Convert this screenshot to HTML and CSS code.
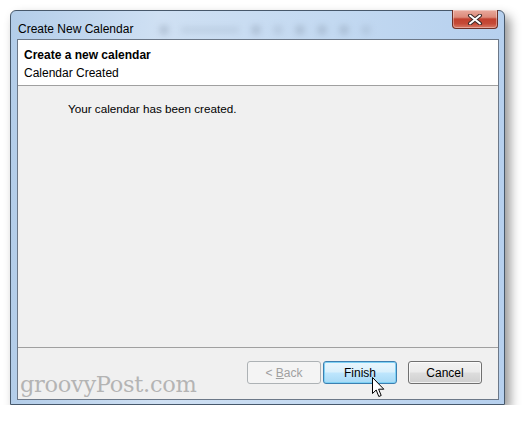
FILE: index.html
```html
<!DOCTYPE html>
<html lang="en">
<head>
    <meta charset="UTF-8">
    <meta name="viewport" content="width=device-width, initial-scale=1.0">
    <title>Create New Calendar</title>
    <link rel="stylesheet" href="styles.css">
</head>
<body>
    <div class="window">
        <div class="titlebar">
            <span class="title">Create New Calendar</span>
            <div class="glass">
                <span class="blur dot"></span>
                <span class="blur smudge"></span>
                <span class="blur dot"></span>
                <span class="blur dot small"></span>
                <span class="blur dot"></span>
                <span class="blur dot"></span>
                <span class="blur dot"></span>
                <span class="blur dot small"></span>
            </div>
            <button class="close" aria-label="Close">
                <svg width="18" height="11" viewBox="0 0 18 11">
                    <path d="M4 1.5 L14 9.5 M14 1.5 L4 9.5" stroke="#3b2a28" stroke-width="4" stroke-linecap="round"/>
                    <path d="M4 1.5 L14 9.5 M14 1.5 L4 9.5" stroke="#ffffff" stroke-width="2" stroke-linecap="round"/>
                </svg>
            </button>
        </div>

        <div class="client">
            <div class="header">
                <div class="header-title">Create a new calendar</div>
                <div class="header-sub">Calendar Created</div>
            </div>
            <div class="content">
                <p class="message">Your calendar has been created.</p>
            </div>
            <div class="footer">
                <button class="btn disabled">&lt; <u>B</u>ack</button>
                <button class="btn default">Finish</button>
                <button class="btn cancel">Cancel</button>
            </div>
            <div class="watermark">groovyPost.com</div>
            <svg class="cursor" width="13" height="21" viewBox="0 0 13 21">
                <path d="M0.5 0.5 L0.5 16.5 L4.2 13 L6.8 19.5 L9.2 18.5 L6.6 12.2 L11.8 12.2 Z" fill="#ffffff" stroke="#000000" stroke-width="1" stroke-linejoin="round"/>
            </svg>
        </div>
    </div>
</body>
</html>
```

FILE: styles.css
```css
/* Windows 7 style wizard dialog */
body {
    margin: 0;
    background: #ffffff;
    font-family: "Liberation Sans", "Noto Sans", sans-serif;
    font-size: 12px;
    color: #000000;
}

.window {
    margin: 10px 0 0 10px;
    width: 495px;
    height: 395px;
    border: 1px solid #47586b;
    border-radius: 6px 6px 0 0;
    background: linear-gradient(90deg, #b3cde9 0%, #cfe0f3 30%, #c3d9f1 65%, #b6d0ee 100%);
    box-shadow: 5px 6px 11px rgba(0, 0, 0, 0.42);
    padding: 0 5px 4px 6px;
    box-sizing: border-box;
    display: flex;
    flex-direction: column;
    position: relative;
}

.titlebar {
    height: 28px;
    display: flex;
    align-items: flex-start;
}

.title {
    margin: 10px 0 0 1px;
    line-height: 16px;
    font-size: 12px;
    color: #000000;
}

.glass {
    flex: 1;
    display: flex;
    gap: 12px;
    margin: 14px 0 0 26px;
}

.blur {
    display: block;
    background: #8797ab;
    filter: blur(3px);
    opacity: 0.4;
}

.dot {
    width: 10px;
    height: 10px;
    border-radius: 50%;
}

.dot.small {
    opacity: 0.25;
}

.smudge {
    width: 58px;
    height: 6px;
    margin-top: 2px;
    opacity: 0.22;
}

.close {
    width: 46px;
    height: 19px;
    margin: -1px 1px 0 0;
    padding: 0;
    border: 1px solid #6e3027;
    border-top: none;
    border-radius: 0 0 4px 4px;
    background: linear-gradient(180deg, #e9aa9c 0%, #dc8a7a 40%, #c2412f 50%, #c54a37 75%, #d97a66 100%);
    box-shadow: inset 0 0 0 1px rgba(255, 255, 255, 0.35);
    display: flex;
    align-items: center;
    justify-content: center;
}

.client {
    flex: 1;
    border: 1px solid #6c7888;
    background: #f0f0f0;
    display: flex;
    flex-direction: column;
    position: relative;
}

.header {
    background: #ffffff;
    height: 46px;
    border-bottom: 1px solid #a0a0a0;
    padding: 6px 0 0 6px;
    box-sizing: border-box;
    line-height: 18px;
}

.header-title {
    font-weight: bold;
}

.content {
    flex: 1;
    border-bottom: 1px solid #a0a0a0;
}

.message {
    margin: 15px 0 0 50px;
    line-height: 16px;
    font-size: 11.7px;
}

.footer {
    height: 51px;
    display: flex;
    justify-content: flex-end;
    align-items: flex-start;
    padding: 13px 16px 0 0;
    box-sizing: border-box;
}

.btn {
    width: 74px;
    height: 23px;
    font-family: inherit;
    font-size: 12px;
    border: 1px solid #707070;
    border-radius: 3px;
    padding: 0;
    color: #000000;
    background: linear-gradient(180deg, #f2f2f2 0%, #ebebeb 48%, #dddddd 52%, #cfcfcf 100%);
    box-shadow: inset 0 0 0 1px rgba(255, 255, 255, 0.7);
}

.btn + .btn {
    margin-left: 2px;
}

.btn.disabled {
    color: #a0a0a0;
    border-color: #adb2b5;
    background: #f4f4f4;
    box-shadow: none;
}

.btn.default {
    border-color: #3c7fb1;
    background: linear-gradient(180deg, #eaf6fd 0%, #d9f0fc 48%, #bee6fd 52%, #a7d9f5 100%);
    box-shadow: inset 0 0 0 1px #7fd1f4;
}

.btn.cancel {
    margin-left: 11px;
}

.watermark {
    position: absolute;
    left: 2px;
    bottom: 2px;
    font-family: "DejaVu Serif", "Liberation Serif", serif;
    font-size: 22.5px;
    color: #b4b4b4;
    letter-spacing: -0.3px;
}

.cursor {
    position: absolute;
    left: 354px;
    top: 337px;
}
```
